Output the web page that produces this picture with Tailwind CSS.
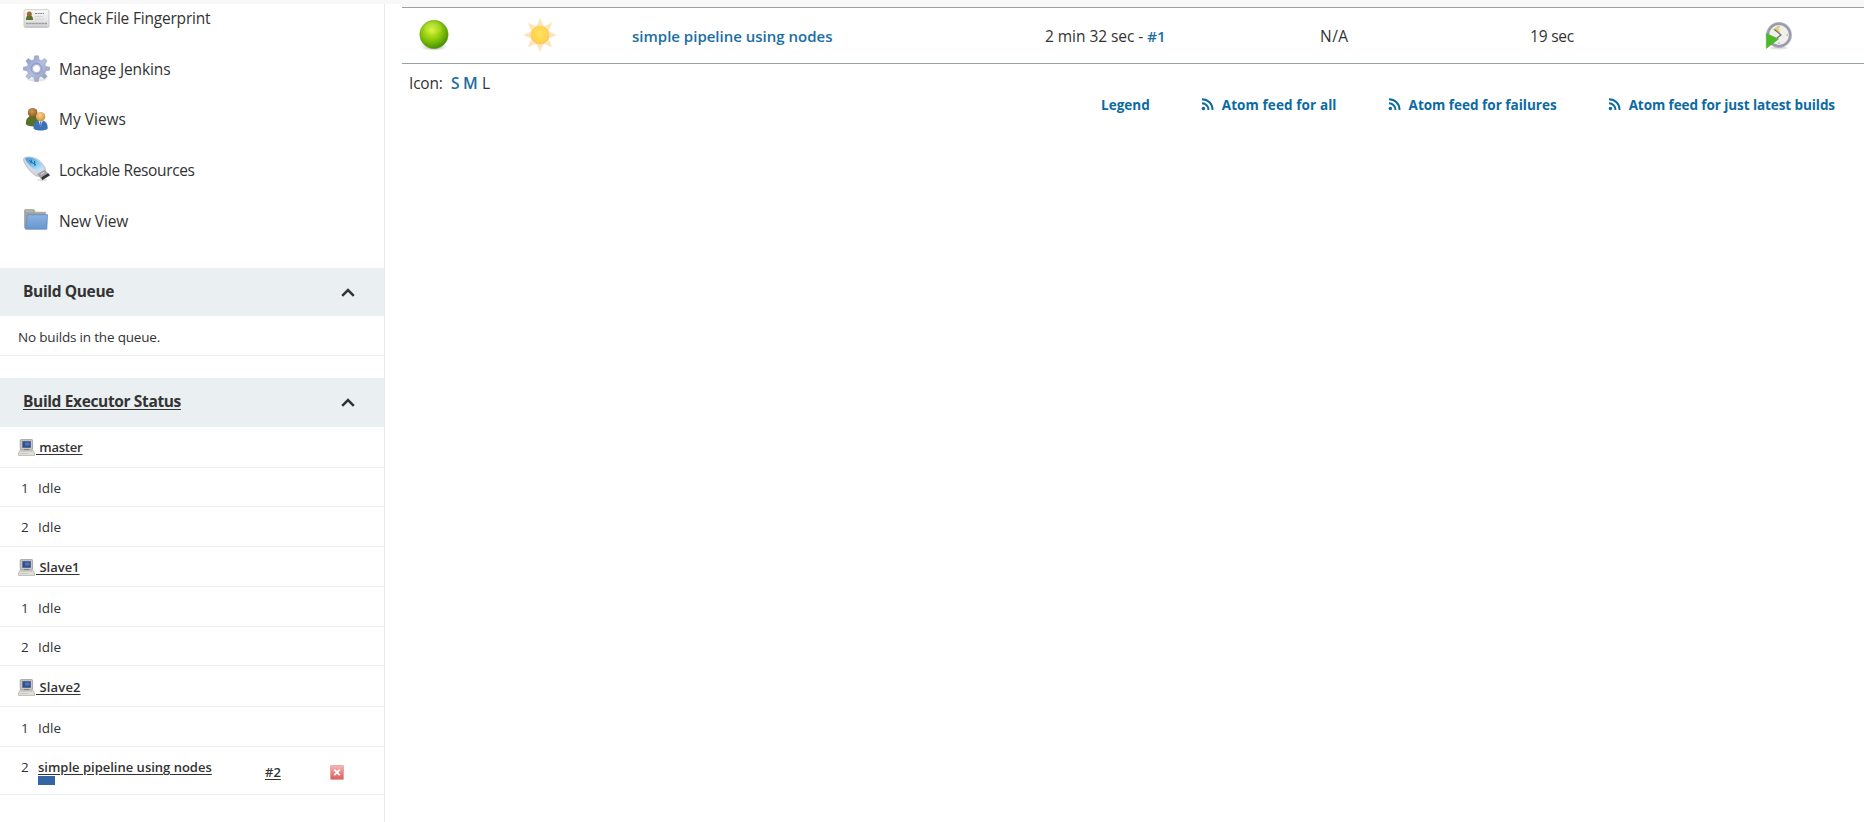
<!DOCTYPE html>
<html lang="en">
<head>
<meta charset="utf-8">
<title>Dashboard [Jenkins]</title>
<script src="https://cdn.jsdelivr.net/npm/@tailwindcss/browser@4"></script>
</head>
<body class="h-[822px] overflow-hidden bg-white font-['Open_Sans','Noto_Sans',sans-serif] text-[15.5px] leading-5 text-[#333]">
<svg class="absolute h-0 w-0">
  <defs>
    <linearGradient id="gGear" x1="0" y1="0" x2="1" y2="1"><stop offset="0" stop-color="#8497c4"/><stop offset=".5" stop-color="#b3bfdf"/><stop offset="1" stop-color="#8e92b8"/></linearGradient>
    <linearGradient id="gCard" x1="0" y1="0" x2="0" y2="1"><stop offset="0" stop-color="#fafafa"/><stop offset="1" stop-color="#d6d6d6"/></linearGradient>
    <linearGradient id="gFold" x1="0" y1="0" x2="0" y2="1"><stop offset="0" stop-color="#8cb2e0"/><stop offset="1" stop-color="#6796d0"/></linearGradient>
    <linearGradient id="gUsb" x1="0" y1="0" x2="1" y2="1"><stop offset="0" stop-color="#4b9bd0"/><stop offset=".45" stop-color="#69c0ef"/><stop offset="1" stop-color="#d2f0fb"/></linearGradient>
    <radialGradient id="gHeadA" cx=".45" cy=".35" r=".65"><stop offset="0" stop-color="#cf9d56"/><stop offset="1" stop-color="#84551c"/></radialGradient>
    <radialGradient id="gHeadB" cx=".45" cy=".35" r=".65"><stop offset="0" stop-color="#fbd594"/><stop offset="1" stop-color="#cf8f32"/></radialGradient>
    <radialGradient id="gBall" cx=".42" cy=".35" r=".68"><stop offset="0" stop-color="#d6f429"/><stop offset=".5" stop-color="#8ecb0c"/><stop offset="1" stop-color="#3f8a00"/></radialGradient>
    <radialGradient id="gSun" cx=".5" cy=".45" r=".55"><stop offset="0" stop-color="#ffe25a"/><stop offset=".7" stop-color="#ffd650"/><stop offset="1" stop-color="#fbc060"/></radialGradient>
    <radialGradient id="gShade" cx=".5" cy=".5" r=".5"><stop offset="0" stop-color="#777" stop-opacity=".6"/><stop offset="1" stop-color="#777" stop-opacity="0"/></radialGradient>
    <linearGradient id="gStop" x1="0" y1="0" x2="0" y2="1"><stop offset="0" stop-color="#f6bbb8"/><stop offset=".5" stop-color="#ea8583"/><stop offset="1" stop-color="#dc5c5c"/></linearGradient>
    <symbol id="pc" viewBox="0 0 17 17">
      <path d="M3 .6h10.800q.8 0 .8.8v8.600q0 .8-.8.8H3q-.8 0-.8-.8V1.400q0-.8.8-.8z" fill="#c9c7bf" stroke="#9a9994" stroke-width=".8"/>
      <rect x="4.300" y="2.200" width="8.500" height="6.600" fill="#34508f"/><path d="M7 3.500h4.500v3H7z" fill="#5273b8"/>
      <path d="M6 10h5v1.600H6z" fill="#807f79"/>
      <path d="M2 11.300h13l1.500 2.700v2.600H.5V14z" fill="#e0dfda" stroke="#a9a8a3" stroke-width=".7"/>
      <path d="M3 12.500h11M2 14.500h8" stroke="#c5c4be" stroke-width=".8"/>
    </symbol>
    <symbol id="rss" viewBox="0 0 13 13"><g fill="none" stroke="#0b6aa2" stroke-width="1.900"><path d="M1 1.200C7 1.200 11.600 5.800 11.600 12"/><path d="M1 5.300C4.700 5.300 7.500 8.200 7.500 12"/></g><circle cx="2.400" cy="10.500" r="1.700" fill="#0b6aa2"/></symbol>
    <symbol id="chev" viewBox="0 0 14 9"><path d="M1.200 7.800L7 2l5.800 5.800" fill="none" stroke="#333" stroke-width="2.500"/></symbol>
  </defs>
</svg>
<div class="flex h-full">
  <aside class="flex w-[385px] flex-none flex-col border-r border-[#e6ecee]">
    <div class="-mr-px h-1 flex-none bg-[#f8f8f8]"></div>
    <nav class="flex h-[264px] flex-none flex-col pl-[23px]">
      <a class="flex h-[26px] items-start gap-[9px] pt-1">
        <svg class="mt-px h-5 w-[27px]" viewBox="0 0 27 20"><rect x="1" y=".7" width="25" height="17.800" rx="1.500" fill="url(#gCard)" stroke="#c2c2c2" stroke-width=".8"/><path d="M2.500 17.300h22" stroke="#bbb" stroke-width=".7"/><path d="M3 11c0-4 1.500-5 3.300-5S10 7 10 11z" fill="#56712a"/><circle cx="6.300" cy="5" r="2.500" fill="#9b6a33"/><path d="M12 4.500h9" stroke="#888" stroke-width="1.200" stroke-dasharray="2 .6"/><path d="M12 7.500h8M12 10h9" stroke="#d0d0d0" stroke-width=".8"/><path d="M3 14.500h21" stroke="#999" stroke-width="1.300" stroke-dasharray="2.500 .6"/></svg>
        <span class="tracking-[-0.2px]">Check File Fingerprint</span>
      </a>
      <a class="flex h-[51px] items-start gap-[9px] pt-[25px]">
        <svg class="h-[27px] w-[27px]" viewBox="0 0 27 27"><ellipse cx="13.500" cy="24.800" rx="9" ry="1.800" fill="#e4e4e4"/><path fill-rule="evenodd" d="M11.600.8h3.800l.7 4 2.200.9 3.500-2.300 2.300 2.300-2.200 3.500.9 2.300 4 .7v2.800l-4 .9-1 2.300 2.300 3.300-2.500 2.500-3.300-2.400-2.300 1-.8 3.800h-3.400l-.8-3.800-2.300-1-3.300 2.400-2.500-2.500 2.300-3.300-1-2.300-4-.9v-2.800l4-.7.900-2.300-2.200-3.500L5.200 3.400l3.500 2.300 2.200-.9zM13.500 9.700a3.900 3.900 0 100 7.800 3.900 3.900 0 000-7.800z" fill="url(#gGear)" stroke="#8f97bb" stroke-width=".5"/><circle cx="13.500" cy="13.600" r="5.300" fill="none" stroke="#8d98c4" stroke-width="1"/></svg>
        <span class="pt-1 tracking-[-0.12px]">Manage Jenkins</span>
      </a>
      <a class="flex h-[50px] items-start gap-[9px] pt-[25px]">
        <svg class="mt-px h-[25px] w-[27px]" viewBox="0 0 27 26"><path d="M2.500 18c-.5-5 2-9 7-9s8 3 8 9c-2 3-13 3-15 0z" fill="#54722a"/><circle cx="9.500" cy="6" r="5" fill="url(#gHeadA)"/><path d="M10.500 22.500c-.8-5 2-9 7-9s8.300 4 7.500 9c-2 2.500-12.500 2.500-14.500 0z" fill="#3d72bb"/><path d="M15.500 13.700h4.600l-2.300 7z" fill="#eef3fa"/><path d="M17.200 15h1.300l.5 4-1.100 2-1.100-2z" fill="#5d83bd"/><circle cx="17.800" cy="10" r="4.900" fill="url(#gHeadB)"/></svg>
        <span class="pt-[3px]">My Views</span>
      </a>
      <a class="flex h-[51px] items-start gap-[9px] pt-[25px]">
        <svg class="h-[27px] w-[27px]" viewBox="0 0 27 27"><ellipse cx="19" cy="24" rx="5" ry="1.300" fill="#e4e4e4"/><path d="M.7 2.500C3.500-.3 13 1 17.300 5.400c3.300 3.400 5.800 7.200 5.300 9.100-.9 3.100-5.700 6.500-8.600 5.700C9.500 19-.8 7 .7 2.500z" fill="#d5d7e2" stroke="#a9adbf" stroke-width=".7"/><path d="M2.500 2.300C5.500.3 12.500 2.500 16 5.700c2.800 2.500 4.700 5.300 4 7.200-.8 1.700-4.700 1.700-7.200.8C9 12.500 1.500 5 2.500 2.300z" fill="url(#gUsb)"/><path d="M6 4.500l6.500 4.200M8.500 3.700l-.5 3.800M11.500 5l.5 5" stroke="#27689c" stroke-width="1"/><path d="M14.500 18.300l7-4 5.300 4.900-7.500 4.800z" fill="#a3a3a7" stroke="#8b8b90" stroke-width=".5"/><path d="M18.300 21.500l6.800-4.200 1.700 1.900-7.500 4.800z" fill="#333335"/><path d="M17.800 18.400l3.500-2.100" stroke="#e5e5e5"/></svg>
        <span class="pt-1 tracking-[-0.36px]">Lockable Resources</span>
      </a>
      <a class="flex h-[51px] items-start gap-[9px] pt-[26px]">
        <svg class="h-[23px] w-[27px]" viewBox="0 0 27 23"><path d="M1.500 20V2.500q0-1 1-1h7.800q1 0 1.200 1l.5 1.700h10.500V20z" fill="#a3a5a0" stroke="#a0a19b" stroke-width=".7"/><path d="M2.500 3h7.500" stroke="#c2c3bf"/><path d="M4.300 6.700h20.200L23.800 21.200H2.500z" fill="url(#gFold)" stroke="#618ac2" stroke-width=".8"/></svg>
        <span class="pt-[3px] tracking-[-0.15px]">New View</span>
      </a>
    </nav>
    <section class="flex-none">
      <header class="flex h-12 items-start justify-between bg-[#eaeff1] pt-[13px] pr-[29px] pl-[23px]">
        <h2 class="font-bold tracking-[-0.35px]">Build Queue</h2>
        <svg class="mt-[7px] h-[9px] w-[14px]"><use href="#chev"/></svg>
      </header>
      <p class="h-10 border-b border-[#eaeff1] pt-[11px] pl-[18px] text-[13.5px] tracking-[-0.18px]">No builds in the queue.</p>
    </section>
    <section class="mt-[22px] flex-none text-[13.5px]">
      <header class="flex h-[49px] items-start justify-between bg-[#eaeff1] pt-[13px] pr-[29px] pl-[23px] text-[15.5px]">
        <h2 class="font-bold tracking-[-0.36px] underline underline-offset-2">Build Executor Status</h2>
        <svg class="mt-[7px] h-[9px] w-[14px]"><use href="#chev"/></svg>
      </header>
      <div class="flex h-[41px] items-start border-b border-[#eaeff1] pt-[10px] pl-[18px]"><svg class="mt-0.5 mr-px h-[17px] w-[17px]"><use href="#pc"/></svg><a class="whitespace-pre text-[13px] font-semibold tracking-[-0.2px] underline underline-offset-2"> master</a></div>
      <div class="flex h-[39px] items-start border-b border-[#eaeff1] pt-[10px] pl-[21px]"><span class="w-[17px]">1</span><span>Idle</span></div>
      <div class="flex h-10 items-start border-b border-[#eaeff1] pt-[10px] pl-[21px]"><span class="w-[17px]">2</span><span>Idle</span></div>
      <div class="flex h-10 items-start border-b border-[#eaeff1] pt-[10px] pl-[18px]"><svg class="mt-0.5 mr-px h-[17px] w-[17px]"><use href="#pc"/></svg><a class="whitespace-pre text-[13px] font-semibold underline underline-offset-2"> Slave1</a></div>
      <div class="flex h-10 items-start border-b border-[#eaeff1] pt-[11px] pl-[21px]"><span class="w-[17px]">1</span><span>Idle</span></div>
      <div class="flex h-[39px] items-start border-b border-[#eaeff1] pt-[10px] pl-[21px]"><span class="w-[17px]">2</span><span>Idle</span></div>
      <div class="flex h-[41px] items-start border-b border-[#eaeff1] pt-[11px] pl-[18px]"><svg class="mt-0.5 mr-px h-[17px] w-[17px]"><use href="#pc"/></svg><a class="whitespace-pre text-[13px] font-semibold tracking-[0.15px] underline underline-offset-2"> Slave2</a></div>
      <div class="flex h-10 items-start border-b border-[#eaeff1] pt-[11px] pl-[21px]"><span class="w-[17px]">1</span><span>Idle</span></div>
      <div class="flex h-12 items-start border-b border-[#eaeff1] pt-[10px] pl-[21px]">
        <span class="w-[17px]">2</span>
        <div class="w-[227px]"><a class="block text-[13px] font-semibold underline underline-offset-2">simple pipeline using nodes</a><div class="-mt-px h-[9px] w-[17px] bg-[#3465a4]"></div></div>
        <a class="w-[65px] pt-[5px] text-[13px] font-semibold underline underline-offset-2">#2</a>
        <svg class="mt-2 h-[15px] w-[14px]" viewBox="0 0 14 15"><rect x=".4" y=".4" width="13.200" height="14.200" rx="1" fill="url(#gStop)" stroke="#e09a98" stroke-width=".8"/><path d="M4.300 4.600l5.400 5.600M9.700 4.600l-5.400 5.600" stroke="#fff" stroke-width="1.900"/></svg>
      </div>
    </section>
  </aside>
  <main class="flex flex-1 flex-col">
    <div class="flex h-[7px] flex-none"><div class="h-1 w-[17px] bg-[#f8f8f8]"></div><div class="flex-1 bg-[#f8f8f8]"></div></div>
    <div class="ml-[17px] flex h-[57px] flex-none items-start border-y border-[#98a1a5]">
      <div class="w-[122px] pt-[11px] pl-[17px]"><svg class="h-8 w-8" viewBox="0 0 32 32"><ellipse cx="15" cy="28" rx="14" ry="4" fill="url(#gShade)"/><circle cx="15" cy="15.500" r="14.200" fill="url(#gBall)" stroke="#6f9f2c" stroke-width=".5"/><ellipse cx="14" cy="9" rx="9" ry="6" fill="#fff" opacity=".1"/></svg></div>
      <div class="w-[108px] pt-[10px]"><svg class="h-[34px] w-8" viewBox="-16 -17 32 34"><g fill="#fde6b4" stroke="#fae0b8" stroke-width=".5"><path id="ray" d="M-2.600-10L0-16.500 2.600-10z"/><use href="#ray" transform="rotate(45)"/><use href="#ray" transform="rotate(90)"/><use href="#ray" transform="rotate(135)"/><use href="#ray" transform="rotate(180)"/><use href="#ray" transform="rotate(225)"/><use href="#ray" transform="rotate(270)"/><use href="#ray" transform="rotate(315)"/></g><circle r="9.500" fill="url(#gSun)" stroke="#fbd79c" stroke-width=".9"/></svg></div>
      <a class="w-[413px] pt-[18px] text-[15px] font-semibold text-[#1b6ea1]">simple pipeline using nodes</a>
      <div class="w-[275px] pt-[18px] tracking-[-0.05px]">2 min 32 sec - <a class="text-[15px] font-semibold text-[#1b6ea1]">#1</a></div>
      <div class="w-[210px] pt-[18px] tracking-[0.5px]">N/A</div>
      <div class="w-[235px] pt-[18px] tracking-[-0.2px]">19 sec</div>
      <div class="pt-[13px]"><svg class="h-[30px] w-[28px]" viewBox="0 0 28 30"><ellipse cx="14" cy="27" rx="9" ry="1.500" fill="#e2e2e2"/><circle cx="14" cy="14" r="11.300" fill="#eef0e9" stroke="#9a9aac" stroke-width="2.700"/><circle cx="14" cy="14" r="12.600" fill="none" stroke="#b9b9c7" stroke-width=".6"/><path d="M7.500 8.500L13 5l2.500 7.500z" fill="#e5cf7c"/><path d="M9.500 8.500l6.500 5.500-4 3" fill="none" stroke="#66666e" stroke-width="1.100"/><path d="M14 5v1.500M14 21.500V23M21.500 14H23" stroke="#999"/><path d="M1.300 12.500v15l12.200-9.500z" fill="#4cba28" stroke="#56a83c" stroke-width=".6"/></svg></div>
    </div>
    <div class="flex h-[31px] flex-none items-baseline pt-[9px] pl-6"><span class="w-[41px] tracking-[-0.2px]">Icon:</span><a class="w-[13px] pl-px font-semibold text-[#1b6ea1]">S</a><a class="w-[19px] text-[16px] font-semibold text-[#1b6ea1]">M</a><span>L</span></div>
    <div class="flex items-center justify-end pr-[29px] text-[13.5px] font-bold text-[#0b6aa2]">
      <a class="mr-[51px]">Legend</a>
      <a class="mr-[51px] flex items-center gap-2 tracking-[0.1px]"><svg class="-mt-0.5 h-[13px] w-[13px]"><use href="#rss"/></svg>Atom feed for all</a>
      <a class="mr-[51px] flex items-center gap-2"><svg class="-mt-0.5 h-[13px] w-[13px]"><use href="#rss"/></svg>Atom feed for failures</a>
      <a class="flex items-center gap-2 tracking-[-0.08px]"><svg class="-mt-0.5 h-[13px] w-[13px]"><use href="#rss"/></svg>Atom feed for just latest builds</a>
    </div>
  </main>
</div>
</body>
</html>
